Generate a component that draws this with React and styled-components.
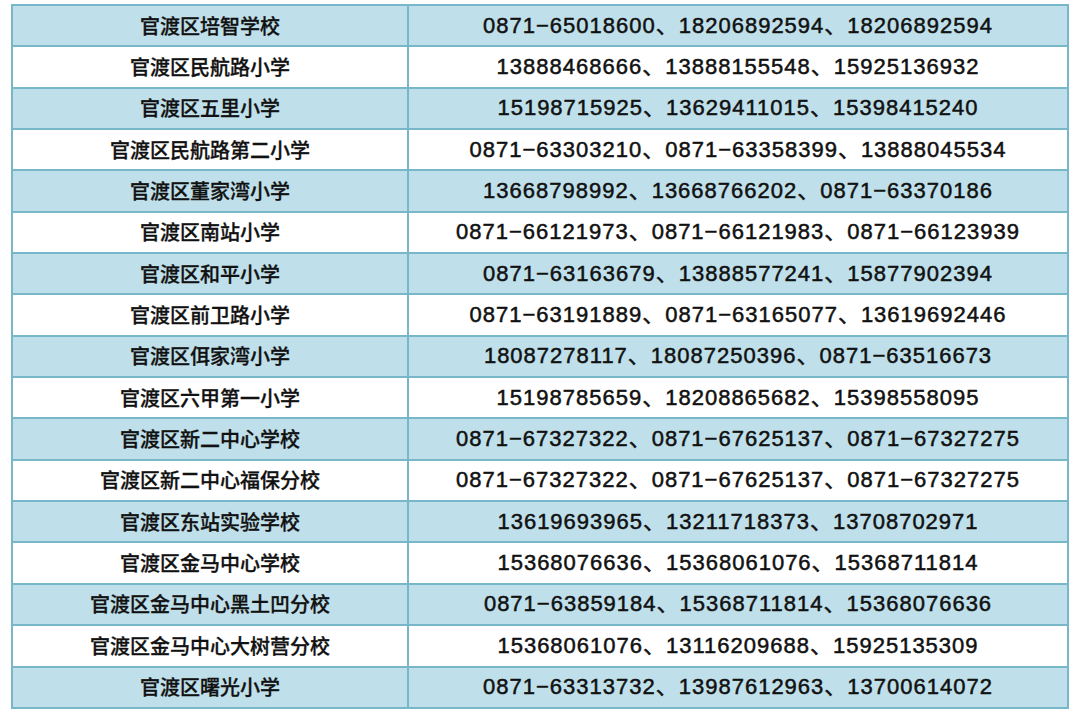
import styled, { createGlobalStyle } from "styled-components";

const rows = [
  ["官渡区培智学校", "0871−65018600、18206892594、18206892594"],
  ["官渡区民航路小学", "13888468666、13888155548、15925136932"],
  ["官渡区五里小学", "15198715925、13629411015、15398415240"],
  ["官渡区民航路第二小学", "0871−63303210、0871−63358399、13888045534"],
  ["官渡区董家湾小学", "13668798992、13668766202、0871−63370186"],
  ["官渡区南站小学", "0871−66121973、0871−66121983、0871−66123939"],
  ["官渡区和平小学", "0871−63163679、13888577241、15877902394"],
  ["官渡区前卫路小学", "0871−63191889、0871−63165077、13619692446"],
  ["官渡区佴家湾小学", "18087278117、18087250396、0871−63516673"],
  ["官渡区六甲第一小学", "15198785659、18208865682、15398558095"],
  ["官渡区新二中心学校", "0871−67327322、0871−67625137、0871−67327275"],
  ["官渡区新二中心福保分校", "0871−67327322、0871−67625137、0871−67327275"],
  ["官渡区东站实验学校", "13619693965、13211718373、13708702971"],
  ["官渡区金马中心学校", "15368076636、15368061076、15368711814"],
  ["官渡区金马中心黑土凹分校", "0871−63859184、15368711814、15368076636"],
  ["官渡区金马中心大树营分校", "15368061076、13116209688、15925135309"],
  ["官渡区曙光小学", "0871−63313732、13987612963、13700614072"],
];

const GlobalStyle = createGlobalStyle`
  html, body {
    margin: 0;
    padding: 0;
    background: #ffffff;
  }
`;

const Page = styled.div`
  padding: 4px 0 0 11px;
  width: 1080px;
  height: 712px;
  box-sizing: border-box;
`;

const Table = styled.table`
  width: 1058px;
  border-collapse: collapse;
  table-layout: fixed;
  border: 2px solid #6eaec2;
`;

const Row = styled.tr`
  height: 41.35px;
  background: ${(p) => (p.$shaded ? "#bfe0ea" : "#ffffff")};
`;

const Cell = styled.td`
  border: 2px solid #78b7c9;
  padding: 0;
  text-align: center;
  vertical-align: middle;
  color: #111111;
  white-space: nowrap;
`;

const NameCell = styled(Cell)`
  width: 394px;
  font-family: "Noto Sans CJK SC", "Noto Sans", sans-serif;
  font-size: 20px;
  font-weight: 500;
  line-height: 1;
  -webkit-text-stroke: 0.3px #111111;
`;

const PhoneCell = styled(Cell)`
  font-family: "Liberation Sans", "Noto Sans CJK SC", sans-serif;
  font-size: 22px;
  letter-spacing: 1px;
  line-height: 1;
  -webkit-text-stroke: 0.5px #111111;
`;

export default function App() {
  return (
    <>
      <GlobalStyle />
      <Page>
        <Table>
          <tbody>
            {rows.map(([name, phones], i) => (
              <Row key={name} $shaded={i % 2 === 0}>
                <NameCell>{name}</NameCell>
                <PhoneCell>{phones}</PhoneCell>
              </Row>
            ))}
          </tbody>
        </Table>
      </Page>
    </>
  );
}
